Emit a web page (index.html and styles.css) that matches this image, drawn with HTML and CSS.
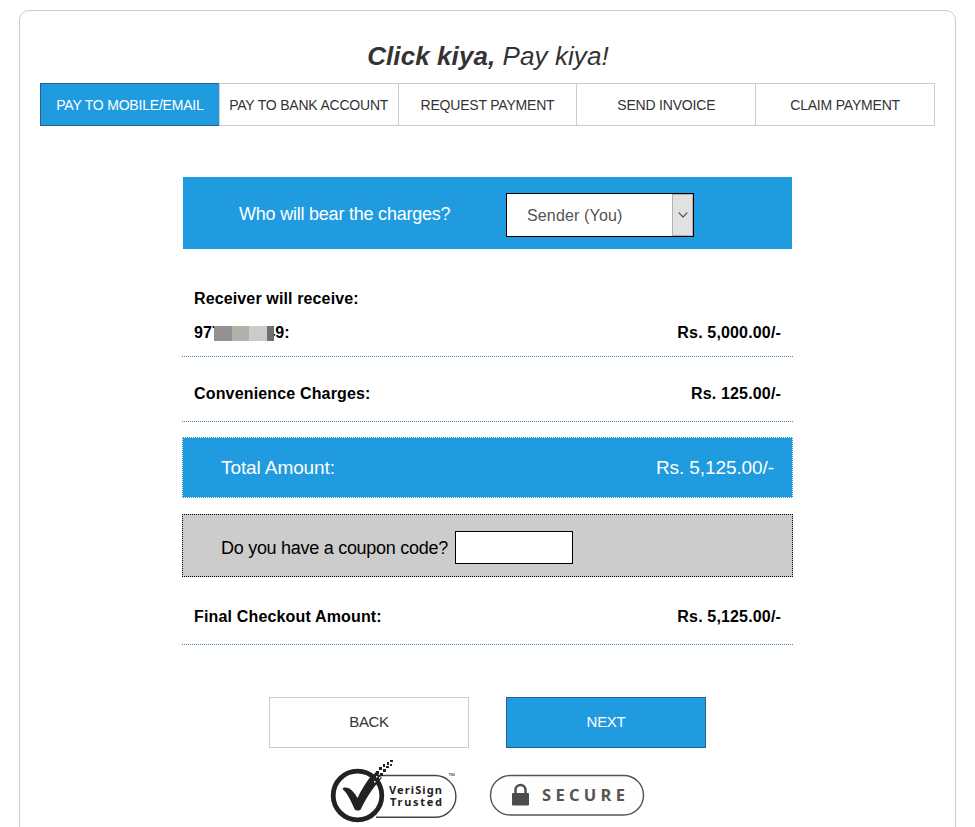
FILE: index.html
```html
<!DOCTYPE html>
<html lang="en">
<head>
    <meta charset="UTF-8">
    <meta name="viewport" content="width=device-width, initial-scale=1.0">
    <title>Click kiya, Pay kiya!</title>
    <link rel="stylesheet" href="styles.css">
</head>
<body>
    <div class="panel">
        <h1 class="tagline"><b>Click kiya,</b> Pay kiya!</h1>
        <nav class="tabs">
            <a class="tab active">PAY TO MOBILE/EMAIL</a>
            <a class="tab">PAY TO BANK ACCOUNT</a>
            <a class="tab">REQUEST PAYMENT</a>
            <a class="tab">SEND INVOICE</a>
            <a class="tab">CLAIM PAYMENT</a>
        </nav>

        <div class="checkout">
            <div class="bearer">
                <span class="bearer-label">Who will bear the charges?</span>
                <div class="select">
                    <span class="select-value">Sender (You)</span>
                    <span class="select-arrow">
                        <svg width="10" height="6" viewBox="0 0 10 6"><path d="M0.7 0.7L5 5L9.3 0.7" fill="none" stroke="#444" stroke-width="1.1"/></svg>
                    </span>
                </div>
            </div>

            <div class="heading">Receiver will receive:</div>
            <div class="row receiver">
                <span class="phone">977<span class="mask"><i></i><i></i><i></i><i></i></span>49:</span>
                <span>Rs. 5,000.00/-</span>
            </div>
            <div class="row charges">
                <span>Convenience Charges:</span>
                <span>Rs. 125.00/-</span>
            </div>
            <div class="total">
                <span>Total Amount:</span>
                <span>Rs. 5,125.00/-</span>
            </div>
            <div class="coupon">
                <label for="coupon">Do you have a coupon code?</label>
                <input type="text" id="coupon" class="coupon-input">
            </div>
            <div class="row final">
                <span>Final Checkout Amount:</span>
                <span>Rs. 5,125.00/-</span>
            </div>
        </div>

        <div class="buttons">
            <button class="button">BACK</button>
            <button class="button primary">NEXT</button>
        </div>

        <div class="seals">
            <svg class="verisign" width="130" height="68" viewBox="0 0 130 68">
                <path d="M48 20.500H105A20.900 20.900 0 0 1 105 62.300H46" fill="#fff" stroke="#444" stroke-width="1.4"/>
                <circle cx="27.500" cy="40.500" r="24.300" fill="#fff" stroke="#222" stroke-width="4.800"/>
                <path d="M12.500 34C14 31.500 19 32.500 22 35.500C24 37.500 26 40.500 27.500 43C31.500 34 37 26 42 20L50 25C42 34 35 45 31 54C30 56 25.500 56 24.500 54C21 46 18 39 12.500 34Z" fill="#222"/>
                <path d="M42 21L46 17L52 23L48 27Z" fill="#222"/>
                <path d="M46 16h3v3h-3zM50 18h3v3h-3zM49 12h3v3h-3zM53 14h3v3h-3zM53 9h2v3h-2zM56 11h3v2h-3zM57 7h2v3h-2zM60 9h2v2h-2zM60 5h3v2h-3z" fill="#222"/>
                <path d="M46 21h1.500v1.500h-1.500zM49 22h1.500v1.500h-1.500zM44 26h1.500v1.500h-1.500z" fill="#fff"/>
                <text class="verisign-text" x="59" y="38.500" textLength="53">VeriSign</text>
                <text class="verisign-text" x="60" y="50.500" textLength="52">Trusted</text>
                <text class="verisign-tm" x="118" y="23">™</text>
            </svg>
            <svg class="secure" width="156" height="42" viewBox="0 0 156 42">
                <rect x="1.500" y="1.500" width="153" height="39.500" rx="19.700" fill="#fefefc" stroke="#555" stroke-width="1.4"/>
                <path d="M26.500 20V16a5 5 0 0 1 10 0V20" fill="none" stroke="#4d4b4d" stroke-width="2.4"/>
                <rect x="23" y="19" width="17" height="12.500" rx="1" fill="#4d4b4d"/>
                <text class="secure-text" x="53" y="27" textLength="83">SECURE</text>
            </svg>
        </div>
    </div>
</body>
</html>
```

FILE: styles.css
```css
* {
    box-sizing: border-box;
}

body {
    margin: 0;
    height: 827px;
    overflow: hidden;
    padding: 10px 19px 0;
    background: #fff;
    color: #333;
    font-family: "Liberation Sans", Arial, sans-serif;
}

.panel {
    width: 937px;
    height: 840px;
    padding: 30px 20px 0;
    border: 1px solid #ccc;
    border-radius: 10px;
}

.tagline {
    margin: 0;
    height: 42px;
    padding-left: 1px;
    font-size: 26px;
    line-height: 30px;
    letter-spacing: 0.08px;
    font-weight: normal;
    font-style: italic;
    text-align: center;
}

/* Tabs */
.tabs {
    display: flex;
    height: 43px;
    border: 1px solid #ccc;
    border-left: none;
}

.tab {
    flex: 1;
    border-left: 1px solid #ccc;
    font-size: 14px;
    line-height: 42px;
    letter-spacing: -0.2px;
    text-align: center;
    white-space: nowrap;
}

.tab.active {
    margin: -1px 0;
    line-height: 42px;
    background: #219be0;
    border: 1px solid #286090;
    border-right: none;
    color: #fff;
}

/* Amounts */
.checkout {
    width: 611px;
    margin: 51px auto 0;
    color: #000;
}

.bearer {
    display: flex;
    align-items: center;
    height: 72px;
    margin: 0 1px;
    padding-left: 56px;
    background: #219be0;
    color: #fff;
    font-size: 18px;
}

.bearer-label {
    width: 267px;
    padding-top: 2px;
    letter-spacing: -0.22px;
}

.select {
    display: flex;
    width: 188px;
    height: 44px;
    margin-top: 4px;
    background: #fff;
    border: 1px solid #000;
    color: #555;
    font-size: 16px;
    line-height: 43px;
    letter-spacing: 0.15px;
}

.select-value {
    flex: 1;
    padding-left: 20px;
}

.select-arrow {
    display: flex;
    align-items: center;
    justify-content: center;
    width: 21px;
    background: #e1e1e1;
    border: 1px solid #b5b0aa;
}

.heading {
    margin-top: 41px;
    padding-left: 12px;
    font-size: 16px;
    line-height: 18px;
    letter-spacing: 0.13px;
    font-weight: bold;
}

.row {
    display: flex;
    justify-content: space-between;
    padding: 0 12px;
    border-bottom: 1px dotted #428bca;
    font-size: 16px;
    line-height: 18px;
    letter-spacing: 0.16px;
    font-weight: bold;
}

.receiver {
    height: 49px;
    padding-top: 16px;
}

.charges {
    height: 65px;
    padding-top: 28px;
}

.final {
    height: 68px;
    padding-top: 31px;
}

.phone {
    display: flex;
}

/* hidden digits of the number */
.mask {
    position: relative;
    display: flex;
    width: 60px;
    height: 15px;
    margin: 2px -8px 0 -7px;
}

.mask i {
    width: 18px;
    background: #929292;
}

.mask i:nth-child(2) {
    width: 17px;
    background: #b3b0a9;
}

.mask i:nth-child(3) {
    background: #cbcbcb;
}

.mask i:nth-child(4) {
    width: 7px;
    background: #707070;
}

.total {
    display: flex;
    justify-content: space-between;
    height: 61px;
    margin-top: 15px;
    padding: 0 18px 0 38px;
    background: #219be0;
    border: 1px dotted #fff;
    color: #fff;
    font-size: 19px;
    line-height: 59px;
    letter-spacing: -0.09px;
}

.coupon {
    display: flex;
    align-items: center;
    height: 63px;
    margin-top: 16px;
    padding-left: 38px;
    background: #ccc;
    border: 1px dotted #000;
    font-size: 18px;
}

.coupon label {
    width: 234px;
    padding-top: 4px;
    line-height: 20px;
    letter-spacing: -0.28px;
    white-space: nowrap;
}

.coupon-input {
    width: 118px;
    height: 33px;
    margin-top: 4px;
    background: #fff;
    border: 1px solid #000;
}

/* Buttons */
.buttons {
    display: flex;
    justify-content: center;
    gap: 37px;
    margin-top: 52px;
}

.button {
    width: 200px;
    height: 51px;
    padding: 0 0 2px;
    background: #fff;
    border: 1px solid #ccc;
    color: #333;
    font-family: inherit;
    font-size: 15px;
    letter-spacing: -0.3px;
}

.button.primary {
    background: #219be0;
    border-color: #286090;
    color: #fff;
}

/* Security seals */
.seals {
    display: flex;
    align-items: flex-start;
    margin: 7px 0 0 290px;
}

.secure {
    margin: 19px 0 0 29px;
}

.verisign-text {
    font: bold 11px "Noto Sans", sans-serif;
    fill: #222;
}

.verisign-tm {
    font: 7px "Liberation Sans", sans-serif;
    fill: #222;
}

.secure-text {
    font: bold 16.5px "Open Sans", sans-serif;
    fill: #555;
}
```
